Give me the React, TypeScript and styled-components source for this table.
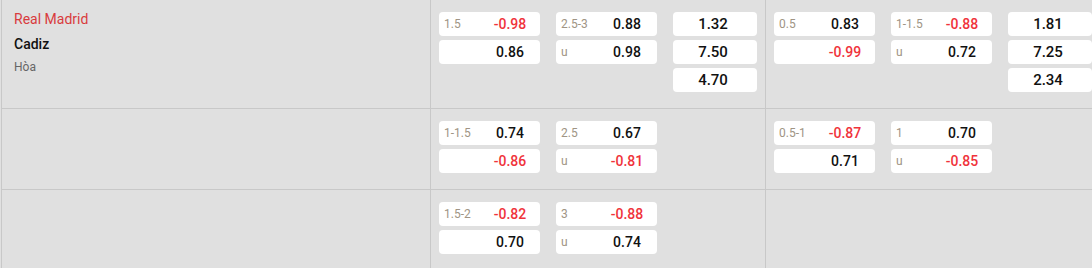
import React from 'react'
import styled, { createGlobalStyle } from 'styled-components'

const GlobalStyle = createGlobalStyle`
  html, body {
    margin: 0;
    padding: 0;
    background: #e0e0e0;
    overflow: hidden;
  }
  body {
    font-family: Roboto, "Liberation Sans", Arial, sans-serif;
  }
`

type Cell = { label?: string; value: string }
type Group = [Cell, Cell] | null
type Line = { hdp: Group; ou: Group; x12?: string[] }

const Table = styled.div`
  margin-left: 1px;
  border-left: 1px solid #c8c8c8;
  width: 1200px;
`

const Row = styled.div`
  display: flex;
  border-bottom: 1px solid #c8c8c8;

  &:last-child {
    border-bottom: none;
  }
`

const TeamCell = styled.div`
  width: 429px;
  flex-shrink: 0;
  border-right: 1px solid #c8c8c8;
  padding: 7px 12px;
  box-sizing: border-box;
`

const TeamName = styled.div<{ $home?: boolean }>`
  font-size: 14px;
  line-height: 24px;
  height: 25px;
  color: ${(p) => (p.$home ? '#d93b3d' : '#111')};
  font-weight: ${(p) => (p.$home ? 400 : 500)};
`

const Draw = styled.div`
  font-size: 12px;
  line-height: 20px;
  color: #666;
`

const Market = styled.div<{ $last?: boolean }>`
  width: 335px;
  flex-shrink: 0;
  box-sizing: border-box;
  padding: 12px 8px 16px;
  display: grid;
  grid-template-columns: 101px 101px 84px;
  column-gap: 16px;
  align-items: start;
  border-right: ${(p) => (p.$last ? 'none' : '1px solid #c8c8c8')};
`

const Stack = styled.div`
  display: flex;
  flex-direction: column;
  gap: 4px;
`

const Box = styled.div`
  height: 24px;
  background: #fff;
  border-radius: 4px;
  display: flex;
  align-items: center;
  padding-left: 5px;
`

const Label = styled.span`
  width: 36px;
  font-size: 12px;
  color: #a09484;
`

const Value = styled.span<{ $neg?: boolean }>`
  flex: 1;
  text-align: center;
  font-size: 14px;
  font-weight: 500;
  color: ${(p) => (p.$neg ? '#f0333b' : '#111')};
`

const OddBox = styled(Box)`
  justify-content: center;
  padding: 0 4px 0 0;
  font-size: 15px;
  font-weight: 500;
  color: #111;
`

const Pair = ({ group }: { group: Group }) =>
  group ? (
    <Stack>
      {group.map((c, i) => (
        <Box key={i}>
          <Label>{c.label}</Label>
          <Value $neg={c.value.startsWith('-')}>{c.value}</Value>
        </Box>
      ))}
    </Stack>
  ) : (
    <div />
  )

const MarketBlock = ({ line, last }: { line: Line; last?: boolean }) => (
  <Market $last={last}>
    <Pair group={line.hdp} />
    <Pair group={line.ou} />
    {line.x12 ? (
      <Stack>
        {line.x12.map((o) => (
          <OddBox key={o}>{o}</OddBox>
        ))}
      </Stack>
    ) : (
      <div />
    )}
  </Market>
)

const rows: { full: Line; half: Line; teams?: boolean }[] = [
  {
    teams: true,
    full: {
      hdp: [{ label: '1.5', value: '-0.98' }, { value: '0.86' }],
      ou: [{ label: '2.5-3', value: '0.88' }, { label: 'u', value: '0.98' }],
      x12: ['1.32', '7.50', '4.70'],
    },
    half: {
      hdp: [{ label: '0.5', value: '0.83' }, { value: '-0.99' }],
      ou: [{ label: '1-1.5', value: '-0.88' }, { label: 'u', value: '0.72' }],
      x12: ['1.81', '7.25', '2.34'],
    },
  },
  {
    full: {
      hdp: [{ label: '1-1.5', value: '0.74' }, { value: '-0.86' }],
      ou: [{ label: '2.5', value: '0.67' }, { label: 'u', value: '-0.81' }],
    },
    half: {
      hdp: [{ label: '0.5-1', value: '-0.87' }, { value: '0.71' }],
      ou: [{ label: '1', value: '0.70' }, { label: 'u', value: '-0.85' }],
    },
  },
  {
    full: {
      hdp: [{ label: '1.5-2', value: '-0.82' }, { value: '0.70' }],
      ou: [{ label: '3', value: '-0.88' }, { label: 'u', value: '0.74' }],
    },
    half: { hdp: null, ou: null },
  },
]

export default function App() {
  return (
    <>
      <GlobalStyle />
      <Table>
        {rows.map((r, i) => (
          <Row key={i}>
            <TeamCell>
              {r.teams && (
                <>
                  <TeamName $home>Real Madrid</TeamName>
                  <TeamName>Cadiz</TeamName>
                  <Draw>Hòa</Draw>
                </>
              )}
            </TeamCell>
            <MarketBlock line={r.full} />
            <MarketBlock line={r.half} last />
          </Row>
        ))}
      </Table>
    </>
  )
}
